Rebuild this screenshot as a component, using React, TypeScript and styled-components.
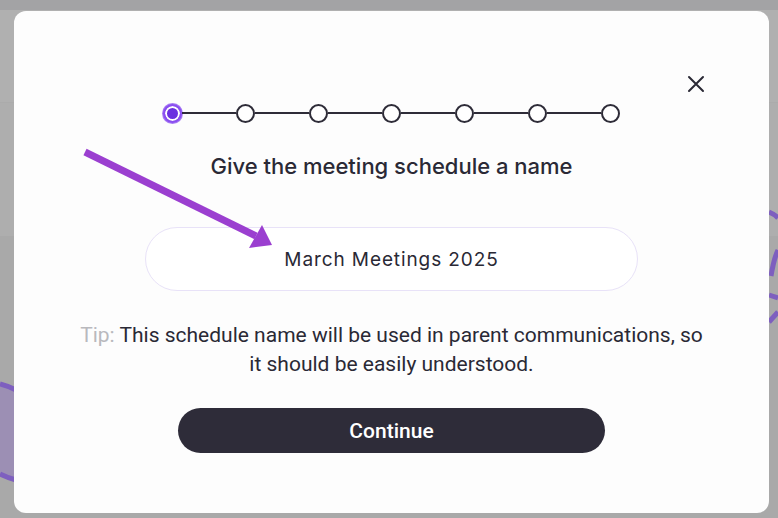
import styled, { createGlobalStyle } from "styled-components";

const GlobalStyle = createGlobalStyle`
  html, body {
    margin: 0;
    padding: 0;
    width: 778px;
    height: 518px;
    overflow: hidden;
    background: #b0b0b0;
  }
`;

const Page = styled.div`
  position: relative;
  width: 778px;
  height: 518px;
  box-sizing: border-box;
  padding: 11px 9px 5px 14px;
  background: linear-gradient(
    to bottom,
    #a3a3a5 0,
    #a3a3a5 10px,
    #b0b0b0 10px,
    #b0b0b0 102px,
    #a8a8a8 102px,
    #aeaeae 103px,
    #aeaeae 236px,
    #a9a9a9 236px
  );
`;

const Backdrop = styled.svg`
  position: absolute;
  inset: 0;
`;

const Modal = styled.div`
  position: relative;
  height: 502px;
  background: #fdfdfd;
  border-radius: 12px;
  display: flex;
  flex-direction: column;
  align-items: center;
  padding-top: 92px;
  box-sizing: border-box;
  font-family: Inter, "Liberation Sans", sans-serif;
  color: #2a2935;
`;

const CloseButton = styled.button`
  position: absolute;
  top: 62px;
  right: 62px;
  width: 22px;
  height: 22px;
  padding: 0;
  border: none;
  background: none;
  display: flex;
  align-items: center;
  justify-content: center;
  cursor: pointer;
`;

const Stepper = styled.div`
  display: flex;
  align-items: center;
  height: 20px;
`;

const Step = styled.div<{ $active?: boolean }>`
  box-sizing: border-box;
  width: 19px;
  height: 19px;
  border-radius: 50%;
  border: 2px solid ${(p) => (p.$active ? "#8a4ef0" : "#2e2c38")};
  background: ${(p) => (p.$active ? "#6a2fe0" : "#fff")};
  box-shadow: ${(p) =>
    p.$active ? "inset 0 0 0 2px #fff, 0 0 0 1px #a77af4" : "none"};
  flex-shrink: 0;
`;

const Line = styled.div`
  width: 54px;
  height: 2px;
  background: #2e2c38;
`;

const Title = styled.h2`
  margin: 31px 0 0;
  font-size: 22px;
  line-height: 24px;
  font-weight: 500;
  color: #2a2935;
`;

const NameInput = styled.input`
  margin-top: 49px;
  width: 493px;
  height: 64px;
  box-sizing: border-box;
  border: 1.5px solid #e8e2f8;
  border-radius: 32px;
  background: #fff;
  text-align: center;
  font-family: Inter, "Liberation Sans", sans-serif;
  font-size: 19px;
  letter-spacing: 0.9px;
  color: #2a2935;
  outline: none;
`;

const Tip = styled.p`
  margin: 30px 0 0;
  width: 630px;
  text-align: center;
  font-family: Roboto, "Liberation Sans", sans-serif;
  font-size: 21px;
  line-height: 29px;
  color: #2a2935;
`;

const TipLabel = styled.span`
  color: #b9b9bd;
`;

const ContinueButton = styled.button`
  margin-top: 29px;
  width: 427px;
  height: 45px;
  border: none;
  border-radius: 23px;
  background: #2e2c39;
  color: #fff;
  font-family: Roboto, "Liberation Sans", sans-serif;
  font-size: 21px;
  font-weight: 500;
  cursor: pointer;
`;

const Arrow = styled.svg`
  position: absolute;
  left: 0;
  top: 0;
  pointer-events: none;
`;

export default function App() {
  const steps = 7;
  return (
    <>
      <GlobalStyle />
      <Page>
        <Backdrop width="778" height="518">
          <path
            d="M0 384 Q8 386 16 390 L16 480 Q8 478 0 474 Z"
            fill="#9c8fb4"
          />
          <path d="M0 384 Q8 386 16 390" stroke="#7e5fbf" strokeWidth="5" fill="none" />
          <path d="M0 474 Q8 478 16 480" stroke="#7e5fbf" strokeWidth="5" fill="none" />
          <path d="M769 212 Q774 214 778 218" stroke="#7e5fbf" strokeWidth="5" fill="none" />
          <path d="M771 276 Q774 258 778 250" stroke="#7e5fbf" strokeWidth="5" fill="none" />
          <path d="M769 295 L778 298" stroke="#7e5fbf" strokeWidth="5" fill="none" />
          <path d="M769 322 L778 312" stroke="#7e5fbf" strokeWidth="5" fill="none" />
        </Backdrop>
        <Modal>
          <CloseButton aria-label="Close">
            <svg width="18" height="18" viewBox="0 0 18 18">
              <path d="M2 2 L16 16 M16 2 L2 16" stroke="#2a2935" strokeWidth="2" strokeLinecap="round" />
            </svg>
          </CloseButton>
          <Stepper>
            {Array.from({ length: steps }).map((_, i) => (
              <Stepper key={i}>
                {i > 0 && <Line />}
                <Step $active={i === 0} />
              </Stepper>
            ))}
          </Stepper>
          <Title>Give the meeting schedule a name</Title>
          <NameInput defaultValue="March Meetings 2025" />
          <Tip>
            <TipLabel>Tip:</TipLabel> This schedule name will be used in parent communications, so it
            should be easily understood.
          </Tip>
          <ContinueButton>Continue</ContinueButton>
        </Modal>
        <Arrow width="778" height="518">
          <line x1="85" y1="152" x2="256" y2="236" stroke="#9b3fd0" strokeWidth="7" />
          <polygon points="272,245 249,248 262,225" fill="#9b3fd0" />
        </Arrow>
      </Page>
    </>
  );
}
